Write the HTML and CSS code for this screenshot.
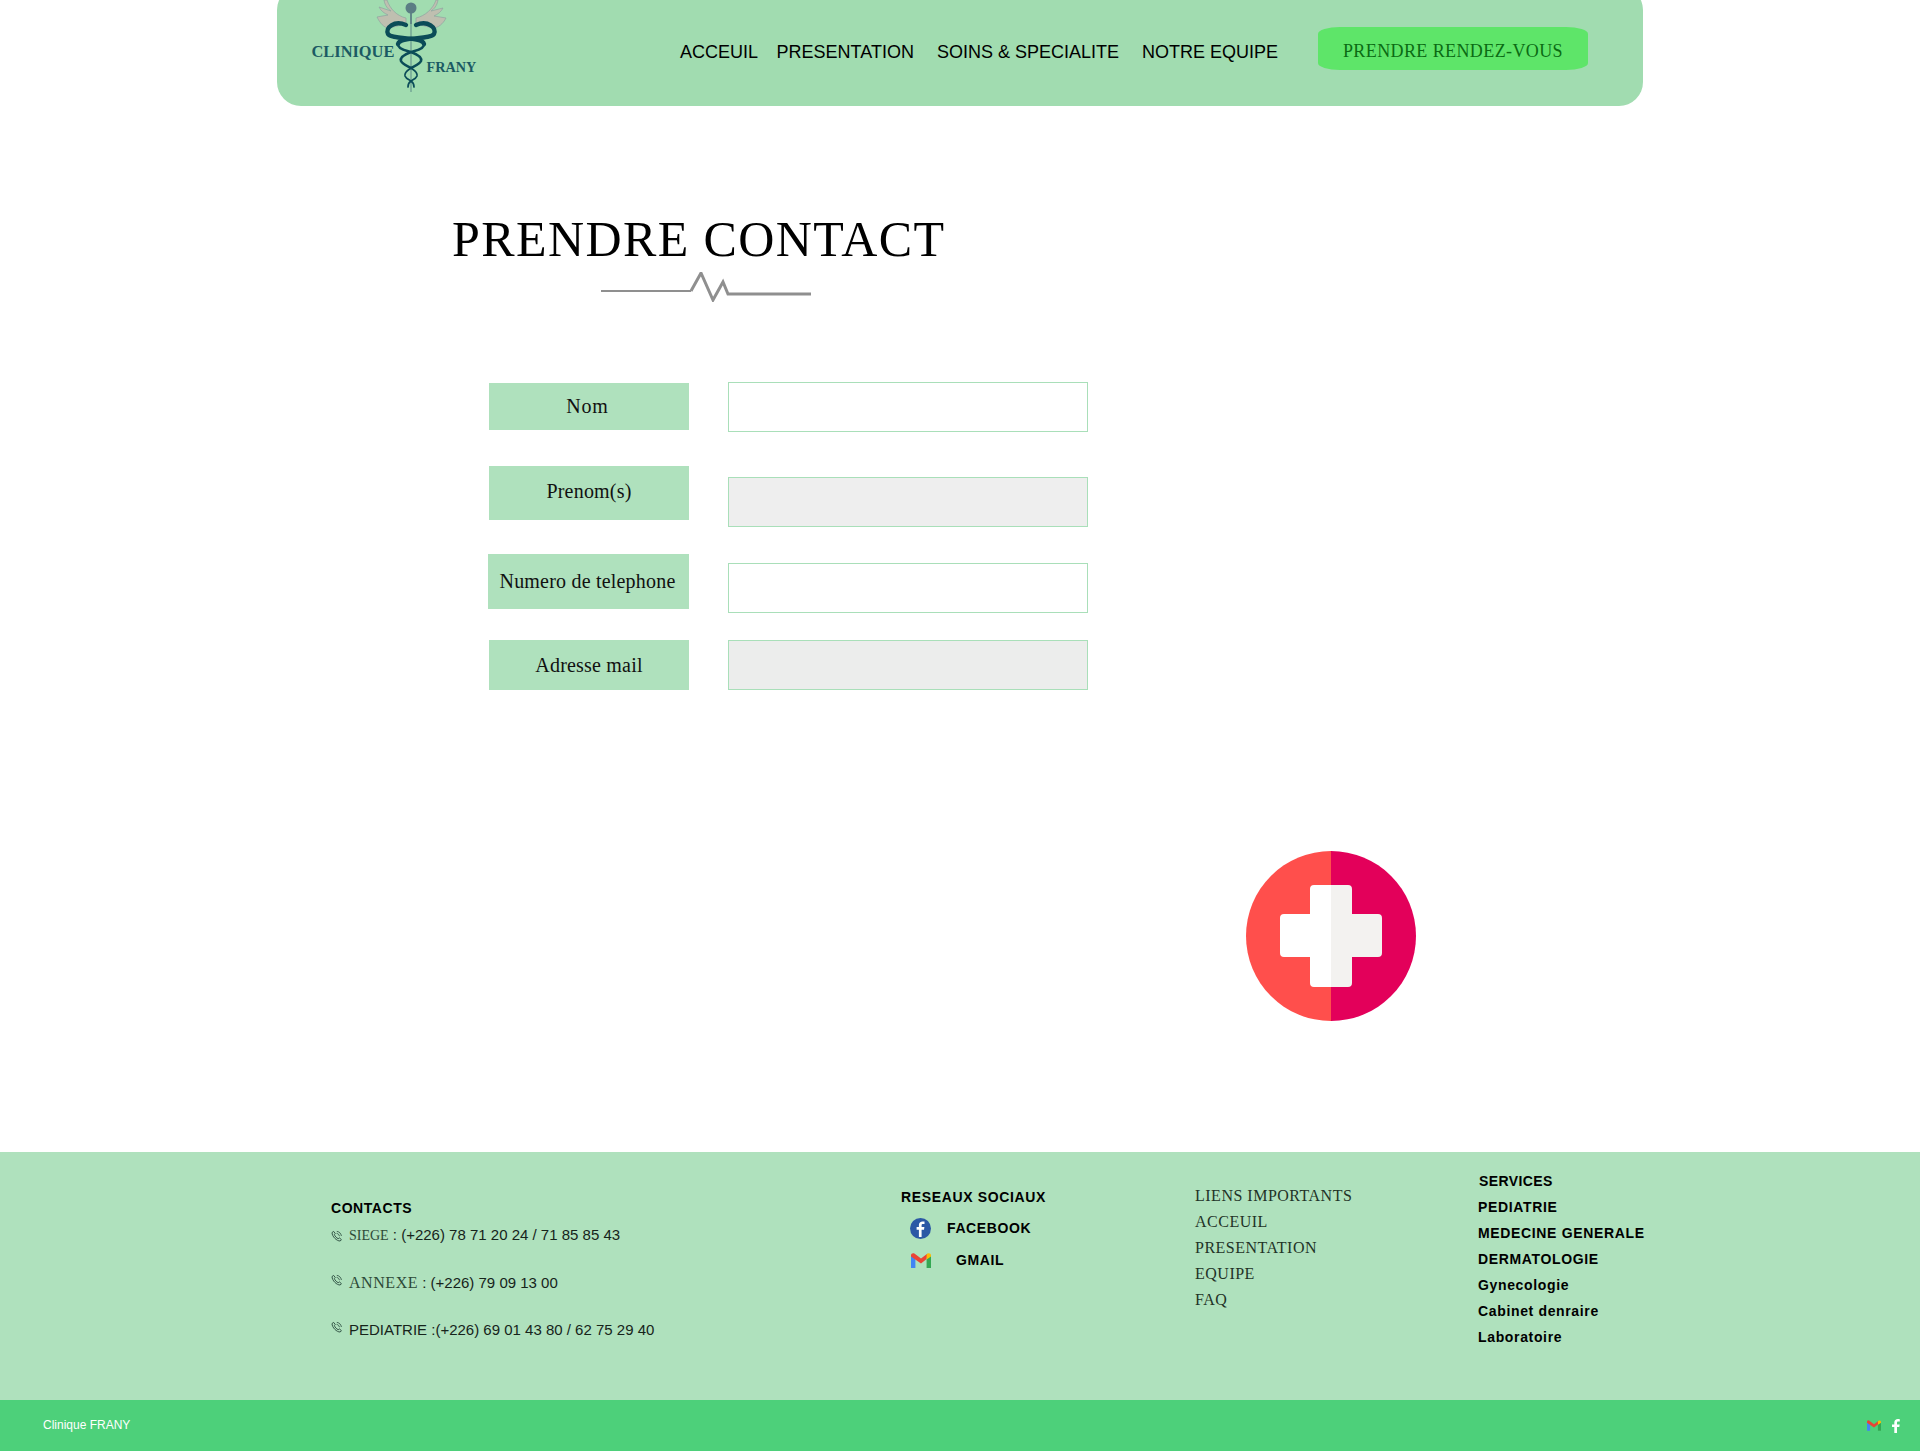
FILE: index.html
```html
<!DOCTYPE html>
<html lang="fr">
<head>
<meta charset="utf-8">
<title>Clinique FRANY - Prendre contact</title>
<link rel="stylesheet" href="styles.css">
</head>
<body>
<svg class="sprites" width="0" height="0" aria-hidden="true">
  <symbol id="phone" viewBox="0 0 12 12">
    <path d="M2.6 1.4 4.2 3.4 3.4 4.6C3.9 6.2 5.4 7.9 7.2 8.7L8.4 7.9 10.4 9.6 9.2 11C5.8 11.2 1 6.4 1 2.6Z" fill="none" stroke="#26463a" stroke-width=".9" stroke-linejoin="round"/>
    <path d="M5.8 1.4C8.2 1.6 10 3.4 10.4 6M5.6 3.4C7 3.6 8.2 4.6 8.4 6.2" fill="none" stroke="#26463a" stroke-width=".8"/>
  </symbol>
  <symbol id="gmail" viewBox="0 0 20 15">
    <path d="M0 2.4V15H4.4V6Z" fill="#4285f4"/>
    <path d="M15.6 6V15H20V2.4Z" fill="#34a853"/>
    <path d="M0 2.4C0 .4 2 -.5 3.4 .6L10 5.6 16.6 .6 15.6 6 10 10.4 0 3.4Z" fill="#ea4335"/>
    <path d="M15.6 1.4C17.2 -.6 20 .2 20 2.6V3.4L15.6 6.6Z" fill="#fbbc04"/>
  </symbol>
</svg>

<header class="site-header">
  <a class="logo" href="#" aria-label="Clinique Frany">
    <svg class="logo-art" width="190" height="100" viewBox="0 0 190 100">
      <g fill="#bfbfb0" stroke="#8fa3a0" stroke-width=".7" stroke-linejoin="round">
        <path d="M84 0C85 6 88 9 91 11L79 7C81 11 84 13 88 15L77 17C80 23 84 28 89 28L106 24 106 18C97 16 90 9 87 0Z"/>
        <path d="M138 0C137 6 134 9 131 11L143 8C141 12 138 14 134 16L146 18C143 24 138 28 133 28L116 24 116 18C125 16 133 9 136 0Z"/>
      </g>
      <path d="M111 8V92" stroke="#5d8a88" stroke-width="1"/>
      <circle cx="111" cy="8" r="5.5" fill="#5b7d84"/>
      <path d="M111 13V24" stroke="#5b7d84" stroke-width="1.6"/>
      <g fill="none" stroke="#0b4c58" stroke-linecap="round">
        <path d="M106 25C94 20 85 28 88 34 92 40 122 36 124 44" stroke-width="4.4"/>
        <path d="M116 25C128 20 137 28 134 34 130 40 100 36 98 44" stroke-width="4.4"/>
        <path d="M124 44C125 50 112 51 111 52 103 55 100 58 101 61 103 65 108 66 111 68" stroke-width="2.6"/>
        <path d="M98 44C97 50 110 51 111 52 119 55 122 58 121 61 119 65 114 66 111 68" stroke-width="2.6"/>
        <path d="M111 68C114 70 118 72 117 76 116 79 112 80 111 81 108 83 108 85 108 87" stroke-width="1.7"/>
        <path d="M111 68C108 70 104 72 105 76 106 79 110 80 111 81 114 83 114 85 114 87" stroke-width="1.7"/>
      </g>
      <text class="logo-word" x="11.5" y="57" font-size="16.4">CLINIQUE</text>
      <text class="logo-word" x="126.5" y="72" font-size="14.2">FRANY</text>
    </svg>
  </a>
  <nav class="main-nav">
    <a class="nav-link nav-first" href="#">ACCEUIL</a>
    <a class="nav-link" href="#">PRESENTATION</a>
    <a class="nav-link" href="#">SOINS &amp; SPECIALITE</a>
    <a class="nav-link" href="#">NOTRE EQUIPE</a>
  </nav>
  <a class="cta" href="#">PRENDRE RENDEZ-VOUS</a>
</header>

<main class="contact">
  <h1 class="contact-title">PRENDRE CONTACT</h1>
  <svg class="pulse" width="212" height="30" viewBox="0 0 212 30">
    <path d="M0 19H90" fill="none" stroke="#8f8f8f" stroke-width="2"/>
    <path d="M90 19 100 1 112 28 122 10 127 22H210" fill="none" stroke="#8f8f8f" stroke-width="3"/>
  </svg>

  <form class="contact-form">
    <label class="field-label label-nom" for="nom">Nom</label>
    <input class="field-input input-nom" id="nom" type="text">
    <label class="field-label label-prenom" for="prenom">Prenom(s)</label>
    <input class="field-input input-prenom" id="prenom" type="text">
    <label class="field-label label-tel" for="tel">Numero de telephone</label>
    <input class="field-input input-tel" id="tel" type="text">
    <label class="field-label label-mail" for="mail">Adresse mail</label>
    <input class="field-input input-mail" id="mail" type="text">
  </form>

  <svg class="medical-cross" width="170" height="170" viewBox="0 0 170 170">
    <path d="M85 0A85 85 0 0 0 85 170Z" fill="#ff4f4c"/>
    <path d="M85 0A85 85 0 0 1 85 170Z" fill="#e3005a"/>
    <path d="M85 34H68Q64 34 64 38V63H38Q34 63 34 67V102Q34 106 38 106H64V132Q64 136 68 136H85Z" fill="#fff"/>
    <path d="M85 34H102Q106 34 106 38V63H132Q136 63 136 67V102Q136 106 132 106H106V132Q106 136 102 136H85Z" fill="#f3f2f0"/>
  </svg>
</main>

<footer class="site-footer">
  <div class="footer-columns">
    <section class="col col-contacts">
      <h2 class="footer-title">CONTACTS</h2>
      <p class="contact-line line-siege"><svg class="phone-icon" width="12" height="12"><use href="#phone"/></svg><span class="serif-word">SIEGE</span> : (+226) 78 71 20 24 / 71 85 85 43</p>
      <p class="contact-line"><svg class="phone-icon" width="12" height="12"><use href="#phone"/></svg><span class="serif-word wide">ANNEXE</span> : (+226) 79 09 13 00</p>
      <p class="contact-line"><svg class="phone-icon" width="12" height="12"><use href="#phone"/></svg>PEDIATRIE :(+226) 69 01 43 80 / 62 75 29 40</p>
    </section>
    <section class="col col-social">
      <h2 class="footer-title title-social">RESEAUX SOCIAUX</h2>
      <a class="social-link" href="#">
        <svg class="social-icon" width="21" height="21" viewBox="0 0 21 21"><circle cx="10.5" cy="10.5" r="10.5" fill="#2b58a5"/><path d="M11.6 19V11.8H14L14.4 9H11.6V7.4C11.6 6.5 12 6 13 6H14.5V3.6C13.9 3.5 13.2 3.4 12.5 3.4 10.4 3.4 8.9 4.7 8.9 7V9H6.6V11.8H8.9V19Z" fill="#fff"/></svg>
        <span>FACEBOOK</span>
      </a>
      <a class="social-link gmail-link" href="#">
        <svg class="social-icon" width="20" height="15"><use href="#gmail"/></svg>
        <span>GMAIL</span>
      </a>
    </section>
    <section class="col col-links">
      <a href="#">LIENS IMPORTANTS</a>
      <a href="#">ACCEUIL</a>
      <a href="#">PRESENTATION</a>
      <a href="#">EQUIPE</a>
      <a href="#">FAQ</a>
    </section>
    <section class="col col-services">
      <h2 class="footer-title services-title">SERVICES</h2>
      <a href="#">PEDIATRIE</a>
      <a href="#">MEDECINE GENERALE</a>
      <a href="#">DERMATOLOGIE</a>
      <a href="#">Gynecologie</a>
      <a href="#">Cabinet denraire</a>
      <a href="#">Laboratoire</a>
    </section>
  </div>
  <div class="footer-bar">
    <span class="copyright">Clinique FRANY</span>
    <span class="bar-icons">
      <svg width="14" height="11"><use href="#gmail"/></svg>
      <svg width="8" height="14" viewBox="0 0 8 14"><path d="M5 14V8H7.3L7.7 5.4H5V3.8C5 3 5.3 2.5 6.3 2.5H7.8V.2C7.3.1 6.6 0 5.9 0 3.8 0 2.3 1.3 2.3 3.5V5.4H0V8H2.3V14Z" fill="#fff"/></svg>
    </span>
  </div>
</footer>
</body>
</html>
```

FILE: styles.css
```css
* { box-sizing: border-box; }

html, body { margin: 0; padding: 0; }

body {
  background: #fff;
  color: #000;
  font-family: "Liberation Sans", Arial, sans-serif;
  overflow: hidden;
  height: 1451px;
}

a { color: inherit; text-decoration: none; }

.sprites { position: absolute; }

/* Header */
.site-header {
  width: 1366px;
  height: 120px;
  margin: -14px auto 0;
  background: #a1dcb0;
  border-radius: 24px;
  display: flex;
  align-items: flex-start;
  position: relative;
}

.logo { margin: 14px 0 0 23px; width: 190px; height: 100px; display: block; }
.logo-art { display: block; }
.logo-word {
  font-family: "Liberation Serif", serif;
  font-weight: 700;
  fill: #1b5a63;
}

.main-nav {
  display: flex;
  gap: 23px;
  margin: 56px 0 0 190px;
  font-size: 18px;
  line-height: 21px;
}
.nav-first { margin-right: -4.5px; }

.cta {
  margin: 41px 0 0 40px;
  width: 270px;
  height: 43px;
  padding-top: 5px;
  background: #5ee569;
  border-radius: 22px / 7px;
  font-family: "Liberation Serif", serif;
  font-size: 18px;
  letter-spacing: .4px;
  color: #0b6b14;
  display: flex;
  align-items: center;
  justify-content: center;
}

/* Main */
.contact { height: 1046px; display: flow-root; }

.contact-title {
  margin: 106px 0 0 452px;
  font-family: "Liberation Serif", serif;
  font-weight: 400;
  font-size: 50px;
  line-height: 55px;
  letter-spacing: 1.4px;
  white-space: nowrap;
}

.pulse { display: block; margin: 5px 0 0 601px; }

.contact-form {
  margin: 80px 0 0 488px;
  display: grid;
  grid-template-columns: 201px 360px;
  column-gap: 39px;
  align-items: start;
}

.field-label {
  background: #afe1bd;
  font-family: "Liberation Serif", serif;
  font-size: 20px;
  letter-spacing: .2px;
  color: #111;
  display: flex;
  align-items: center;
  justify-content: center;
  margin-left: 1px;
}
.label-nom { height: 47px; margin-top: 1px; padding-right: 3px; letter-spacing: .8px; }
.label-prenom { height: 54px; margin-top: 34px; padding-bottom: 4px; }
.label-tel { height: 55px; margin-top: 27px; margin-left: 0; padding-right: 2px; }
.label-mail { height: 50px; margin-top: 27px; }

.field-input {
  display: block;
  width: 360px;
  border: 1px solid #a9dfb9;
  background: #fff;
  padding: 0;
  outline: none;
}
.input-nom { height: 50px; }
.input-prenom { height: 50px; margin-top: 45px; background: #eeeeee; }
.input-tel { height: 50px; margin-top: 36px; }
.input-mail { height: 50px; margin-top: 27px; background: #ecedec; }

.medical-cross { display: block; margin: 161px 0 0 1246px; }

/* Footer */
.site-footer { height: 299px; background: #afe1bd; }

.footer-columns { height: 248px; display: flex; padding-left: 331px; }

.col { flex: none; }
.col-contacts { width: 570px; padding-top: 47px; }
.col-social { width: 294px; padding-top: 36px; }
.col-links {
  width: 283px;
  padding-top: 31px;
  display: flex;
  flex-direction: column;
  font-family: "Liberation Serif", serif;
  font-size: 16px;
  line-height: 26px;
  letter-spacing: .5px;
  color: #1f3327;
}
.col-services {
  padding-top: 16px;
  display: flex;
  flex-direction: column;
  font-size: 14px;
  font-weight: 700;
  line-height: 26px;
  letter-spacing: .65px;
}

.footer-title {
  margin: 0;
  font-size: 14px;
  font-weight: 700;
  line-height: 18px;
  letter-spacing: .55px;
}
.title-social { letter-spacing: .65px; }
.services-title { line-height: 26px; margin-left: 1px; letter-spacing: .4px; }

.contact-line {
  margin: 0 0 24px;
  font-size: 15px;
  line-height: 23px;
  color: #16241b;
  display: block;
  white-space: nowrap;
}
.line-siege { margin-top: 6px; }

.phone-icon { display: inline-block; margin-right: 6px; vertical-align: 2px; }
.line-siege .phone-icon { vertical-align: -2px; }

.serif-word { font-family: "Liberation Serif", serif; font-size: 14px; color: #2d4a38; }
.serif-word.wide { font-size: 16px; letter-spacing: .55px; }

.social-link {
  display: flex;
  align-items: center;
  font-size: 14px;
  font-weight: 700;
  letter-spacing: .6px;
  height: 32px;
  margin-left: 9px;
}
.social-link:first-of-type { margin-top: 6px; }
.social-icon { flex: none; margin-right: 16px; }
.gmail-link .social-icon { margin-left: 1px; margin-right: 25px; }

.footer-bar {
  height: 51px;
  background: #4dd07a;
  display: flex;
  align-items: center;
  justify-content: space-between;
  padding: 0 20px 2px 43px;
  color: #fff;
}
.copyright { font-size: 12px; }
.bar-icons { display: flex; align-items: center; gap: 11px; padding-top: 2px; }
.bar-icons svg { display: block; }
```
